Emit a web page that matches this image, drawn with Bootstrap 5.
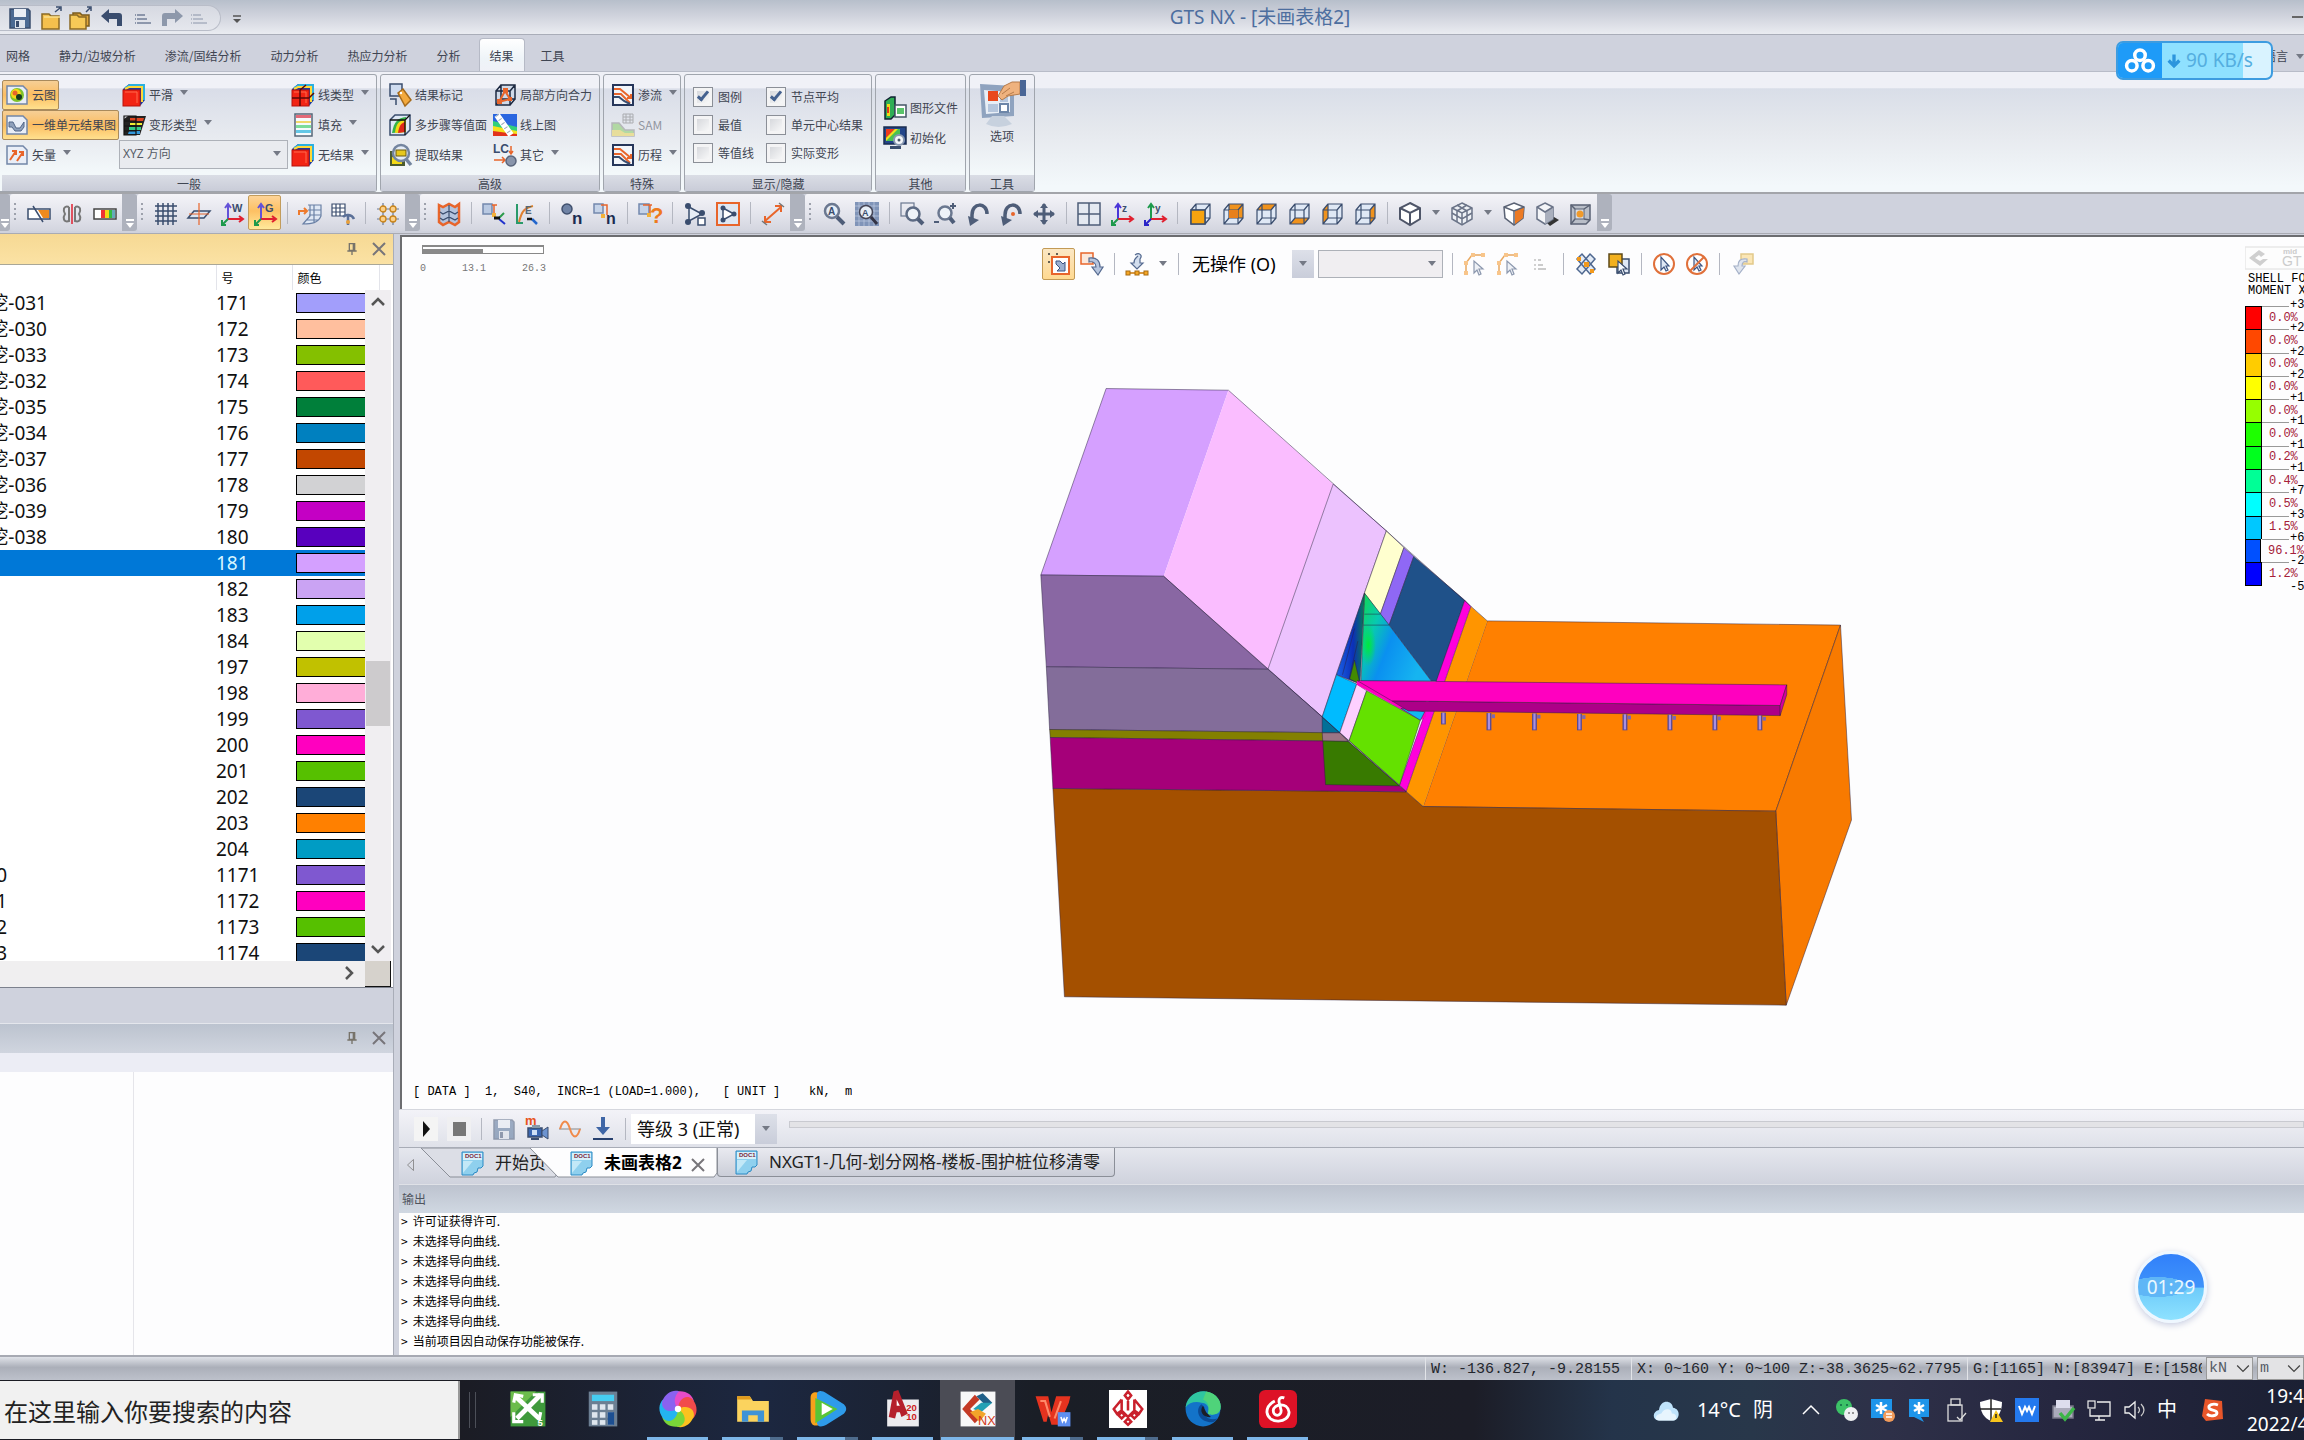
<!DOCTYPE html>
<html lang="zh-CN">
<head>
<meta charset="utf-8">
<meta name="viewport" content="width=device-width, initial-scale=1">
<title>GTS NX - [未画表格2]</title>
<link href="https://cdn.jsdelivr.net/npm/bootstrap@5.3.0/dist/css/bootstrap.min.css" rel="stylesheet">
<style>
:root{--ui:"Noto Sans","Noto Sans CJK SC",sans-serif;--mono:"Liberation Mono","Noto Sans CJK SC",monospace;--chrome:#cfd2dd;--ink:#3f4552}
body{font:12px/16px "Noto Sans CJK SC",sans-serif;color:var(--ink);background:var(--chrome);overflow:hidden}
button{font:inherit;color:inherit;background:none;border:0;padding:0}
a{color:inherit;text-decoration:none}
.ic{width:24px;height:24px;flex:none;display:block;overflow:visible}
.ic.thin{width:16px}
.caret{width:0;height:0;border:4px solid transparent;border-top:5px solid #747985;border-bottom:0;flex:none}
.title-bar{height:35px;background:linear-gradient(#b7bfcb,#cfd2dc 45%,#eaecf1);border-bottom:1px solid #a9adb8}
.quick{height:26px;margin-top:5px;border:1px solid #b9bdc8;border-left:0;border-radius:0 13px 13px 0;background:linear-gradient(#d6d9e1,#e5e7ed)}
.win-title{font:19px/24px var(--ui);color:#4d6e9f;padding:5px 0 0 216px}
.tab-row{height:36px;padding-top:3px;background:var(--chrome)}
.tab-row a{padding:10px 15px 0 14px;height:33px;border:1px solid transparent;border-width:0 0 1px}
.tab-row a:first-child{padding-left:6px}
.tab-row a.on{padding:9px 10px 0;height:34px;margin:0 2px 0 3px;background:linear-gradient(#fff,#eef4f8 60%,#f0f1f7);border:1px solid #b6bac6;border-bottom:0;border-radius:4px 4px 0 0}
.ribbon{height:122px;padding-top:2px;gap:3px;background:linear-gradient(#eff0f6 0 13%,#d9dee8 14%,#e6e9ee 50%,#f3f8fb 95%);border-top:1px solid #b8bcc8}
.grp{height:118px;border:1px solid #a0a5ad;border-radius:3px;background:linear-gradient(#f0f1f7 0 11%,#d9dde8 12%,#e8ebf0 55%,#f3f8fa 84%)}
.grp:first-child{border-left:0;border-radius:0 3px 3px 0;padding-left:2px}
.grp-in{height:100px;padding-top:5px}
.grp-name{height:16px;text-align:center;line-height:18px;background:linear-gradient(#dadde5,#c9ccd8)}
.rb{height:30px;display:flex;align-items:center;gap:3px;padding:0 2px;border:1px solid transparent;white-space:nowrap;border-radius:2px}
.rb.on{background:linear-gradient(#f6cf96,#fbbd62 50%,#ffe08e);border-color:#a98a5c}
.rb .caret{margin-left:4px;margin-bottom:4px}
.ck{height:28px;display:flex;align-items:center;gap:5px;white-space:nowrap}
.ck input{appearance:none;width:20px;height:20px;margin:0;border:1px solid #8b8f97;background:linear-gradient(135deg,#cfd1d6,#fff) padding-box;box-shadow:inset 0 0 0 3px #f4f4f5;display:grid;place-items:center}
.ck input:checked::after{content:"";width:6px;height:12px;border:solid #44618f;border-width:0 3px 3px 0;rotate:40deg;margin-top:-4px}
.combo{appearance:none;border:1px solid #adb1b8;border-radius:0;background:#e9ebef;color:#555b66;padding:0 3px;font:12px/16px var(--ui);outline:0}
.combo-box{position:relative}
.combo-box .caret{position:absolute;right:7px;top:50%;margin-top:-3px;pointer-events:none}
.combo.dir{width:169px;height:29px}
.big{width:48px;height:48px}
.drop{width:19px;display:flex;justify-content:center}
.tool-row{height:42px;border-top:2px solid #a3a5aa;border-bottom:1px solid #a9abb3;background:var(--chrome)}
.tbar{height:37px;background:linear-gradient(#f4f4f8,#e3e4ec 55%,#d3d5df);padding:0 1px 0 4px;border-radius:3px 0 0 3px}
.tbar .tb{width:33px;height:35px;padding-top:2px;display:flex;align-items:center;justify-content:center}
.tbar .tb.on{background:linear-gradient(#fdd498,#fdc063 45%,#ffe99b);border:1px solid #c29c5c;border-radius:2px}
.tbar .vr2{width:12px}
.vr2{display:flex;justify-content:center;flex:none}
.vr2::before{content:"";width:1px;height:22px;background:#b4b7c1}
.dots{width:4px;height:20px;margin-right:4px;background:repeating-linear-gradient(#9da1ac 0 2px,transparent 2px 5px) 0 0/2px 100% no-repeat}
.cap{width:15px;height:37px;background:#aeb2bd;display:flex;flex-direction:column;align-items:center;justify-content:flex-end;padding-bottom:3px;border-radius:0 3px 3px 0}
.cap:first-child{width:10px}
.cap::before{content:"";width:8px;height:2px;background:#fff;margin-bottom:2px}
.cap::after{content:"";border:4px solid transparent;border-top:5px solid #fff;border-bottom:0}
.side{width:394px;border-right:1px solid #a9adb8}
.pane-title{height:30px;padding:0 6px;gap:11px;background:linear-gradient(#bcc3cf,#d0d5df);border-top:1px solid #e4e6ec;color:#6c6f76}
.pane-title.gold{height:31px;background:linear-gradient(#f6d994,#fbe2a4);border-bottom:1px solid #a9a797;border-top:0}
.tree-box{padding-right:2px}
.tree{table-layout:fixed;width:380px;font:19px/26px var(--ui);color:#111;margin:0}
.tree th{font:12px/25px "Noto Sans CJK SC",sans-serif;height:25px;padding:0 0 0 5px;border-right:1px solid #e3e4ea;color:#000}
.tree th:nth-child(1){width:216px}.tree th:nth-child(2){width:76px}
.tree td{height:26px;padding:0;overflow:hidden;white-space:nowrap}
.tree tr.sel{background:#0078d7;color:#d8f6ff}
.nm{width:47px;display:flex;justify-content:flex-end;overflow:hidden;height:26px}
.nm.far{width:7px}
.sw{height:20px;margin-left:4px;border:1px solid #000;border-right:0}
.vscroll{width:26px;top:25px;background:#f0eef1}
.hscroll{height:26px;background:#f0eff0}
.vscroll .thumb{height:65px;width:24px;background:#cdcbcd;margin-top:347px}
.corner{width:26px;background:#d6d2cc;border:solid #111;border-width:0 1px 1px 0}
.gap-strip{height:36px;border-top:1px solid #7c818d}
.prop-head{height:19px;background:#ecedf5}
.prop-body{height:285px;background:#fdfdfe}
.prop-body div{width:134px;border-right:1px solid #e5e5ea}
.work{margin-left:5px}
.view{background:#fdfdfe;border:2px solid #6c6d70;border-width:2px 0 0 2px;margin:1px 0 0 1px;position:relative;overflow:hidden}
.scene{position:absolute;inset:0;width:100%;height:100%}
.vtools{position:absolute;left:640px;top:10px;height:34px;color:#000;font:18px/24px var(--ui)}
.vtools .tb{width:33px;height:32px;display:flex;align-items:center;justify-content:center}
.vtools .tb.on{background:linear-gradient(#fbe7c4,#ffd991);border:1px solid #c39a55;border-radius:2px}
.vtools .vr2{width:12px}
.vtools .combo{width:125px;height:28px;background:#f0eef1}
.ddbtn{width:22px;height:28px;display:flex;align-items:center;justify-content:center;background:linear-gradient(#dde0e9,#c9cdda)}
.ruler{position:absolute;left:18px;top:8px;width:126px;color:#777;font:10px/12px var(--mono)}
.ruler i{display:block;height:9px;margin:0 2px 9px;border:1px solid #888;border-width:2px 1px 1px;background:linear-gradient(90deg,#8a8a8a 50%,#fff 50%) 0 100%/100% 4px no-repeat}
.legend{position:absolute;right:0;top:9px;width:59px;color:#000;font:12px/12px var(--mono);white-space:nowrap;overflow:hidden}
.lg-brand{width:60px;height:24px;display:block}
.lg-head{padding:3px 0 9px 3px}
.lg-row{height:280px;margin-bottom:9px}
.lg-item{flex:1 1 0;position:relative;display:flex;align-items:center;color:#a52039}
.lg-item b{width:17px;align-self:stretch;border:1px solid #000;border-bottom-width:0;margin-right:7px}
.lg-item:last-child b{border-bottom-width:1px}
.lg-item::before{content:"";position:absolute;left:17px;top:0;width:27px;height:1px;background:#999}
.lg-item em{position:absolute;left:45px;top:-7px;color:#000;font-style:normal}
.lg-item em.end{top:auto;bottom:-7px}
.datum{position:absolute;left:11px;bottom:10px;margin:0;color:#000;font:12px/14px var(--mono);overflow:hidden}
.player{height:38px;background:linear-gradient(#f3f3f8,#dfe1e9);border-top:1px solid #d5d7de;padding-left:10px}
.player .tb{width:33px;height:32px;display:flex;align-items:center;justify-content:center}
.player .vr2{width:12px}
.player .combo{width:146px;height:30px;background:#fff;border:0;font:18px/24px var(--ui);color:#111;padding-left:6px}
.player .dd{position:absolute;right:0;top:0;height:30px}
.player .dd .caret{position:static;margin:0}
.track{appearance:none;height:7px;margin:0 0 8px 12px;border:1px solid #c9cad0;background:#e3e3e6;flex:1 1 0}
.track::-webkit-slider-thumb{appearance:none;width:0;height:0}
.docs{height:37px;background:linear-gradient(#e5e7ee,#cfd2dd);border-top:1px solid #a8acb6;font:17px/28px var(--ui);color:#222;padding-left:5px}
.docs .prev{width:12px;height:18px;display:block}
.docs .x{width:16px;height:16px}
.doc{position:relative;height:30px;display:flex;align-items:center;white-space:nowrap}
.doc>*{position:relative}
.doc>svg.edge{position:absolute;inset:0;width:100%;height:100%}
.doc .ic{margin-right:10px}
.doc.d1{width:137px;padding-left:40px;margin-left:5px}
.doc.d2{width:187px;padding-left:40px;margin-left:-28px;color:#000}
.doc.d3{height:29px;padding:0 14px 0 17px;border:1px solid #8b8f98;border-top:0;border-radius:0 0 4px 4px;background:linear-gradient(#e9eaf0,#cbced8)}
.out-title{height:29px;background:linear-gradient(#bdc3cf,#d0d8e2);padding:6px 3px;color:#50555f;border-top:1px solid #dfe1e7}
.log{height:142px;background:#fdfdfd;color:#000;font:12px/16px "Noto Sans CJK SC",sans-serif;padding:0 2px;overflow:hidden}
.log div{height:20px}
.log div::before{content:">";margin-right:5px}
.status{height:25px;border-top:2px solid #a7aab3;background:linear-gradient(#dfe2e8,#abafb9 45%,#bdc1cb);font:15px/22px var(--mono);color:#23262d;white-space:nowrap}
.status>span{border-left:1px solid #e2e4e8;padding:2px 0 0 5px;overflow:hidden}
.st1{width:206px}.st2{width:336px}.st3{width:235px}
.status .combo{height:23px;width:47px;background:#e3e3e5;font:15px/20px var(--mono);border-color:#999;padding:0 2px}
.status .cv{position:absolute;right:0;top:0;width:20px;height:22px}
.taskbar{height:60px;background:linear-gradient(90deg,#1b1c24 20%,#1c2740 33%,#1a1e26 45%,#1c1d27 64%,#24344a 70%,#28374a 76%,#2e3048 82%,#25263f 90%,#1b2033);color:#fff;font:20px/28px var(--ui)}
.search{width:460px;height:58px;margin:1px 0;border:0;border-right:2px solid #999;border-radius:0;background:#f1f1f1;color:#222;font:24px/30px "Noto Sans CJK SC",sans-serif;padding:0 0 0 4px}
.search::placeholder{color:#222;opacity:1}
.app{width:75px;height:60px;padding:0 7px;display:flex;flex-direction:column;align-items:center;justify-content:flex-end}
.app .ic{width:38px;height:38px;margin-bottom:9px}
.app i{height:3px;width:100%}
.app.run i{background:#7db6e8}
.app.more i{background:linear-gradient(90deg,#7db6e8 78%,#4e6b8c 78%)}
.app.on{background:#4b4c55;padding:0 1px}
.grip{width:7px;height:36px;border:solid #4c4f58;border-width:0 1px;margin:0 14px 0 9px}
.tray .ic{margin:0 6px}
.tray .ic.wx{width:34px;height:28px}
.clock{width:57px;text-align:right;font-size:19px;line-height:28px;overflow:hidden}
.speed{position:absolute;right:31px;top:41px;width:157px;height:39px;border:2px solid #3d9ce0;border-radius:7px;background:linear-gradient(90deg,#8fe1ff 82%,#d9f3ff 82%);color:#54aee0;font:19px/35px var(--ui);overflow:hidden;z-index:3}
.speed .cl{width:44px;height:35px;background:#1e9bf8;display:flex;align-items:center;justify-content:center}
.speed .cl svg{width:34px;height:28px}
.speed .dn{width:16px;height:35px;margin:0 4px}
.bubble{position:absolute;right:97px;bottom:117px;width:72px;height:72px;border-radius:50%;border:3px solid #eef7ff;background:radial-gradient(ellipse 30px 10px at 30% 50%,#5fb6f6 98%,transparent),linear-gradient(#3180fa,#3f93fa 50%,#6ecbfa 52%,#8ee2ff);box-shadow:0 2px 7px #c5cbe0;color:#e9f8ff;font:19px/66px var(--ui);text-align:center}
</style>
</head>
<body class="d-flex flex-column vh-100">
<header class="title-bar d-flex position-relative flex-none">
  <div class="quick d-flex align-items-center">
    <button class="ms-2" aria-label="保存"><svg class="ic" data-i="save"></svg></button>
    <button class="ms-2" aria-label="打开"><svg class="ic" data-i="folder"></svg></button>
    <button class="ms-1" aria-label="全部打开"><svg class="ic" data-i="folders"></svg></button>
    <button class="ms-2" aria-label="撤销"><svg class="ic" data-i="undo"></svg></button>
    <button class="ms-2" aria-label="撤销列表"><svg class="ic" data-i="list"></svg></button>
    <button class="ms-1" aria-label="重做"><svg class="ic" data-i="redo"></svg></button>
    <button class="ms-1 me-2 opacity-50" aria-label="重做列表"><svg class="ic" data-i="list"></svg></button>
  </div>
  <button class="ms-1" aria-label="自定义"><svg class="ic" data-i="more"></svg></button>
  <div class="win-title position-absolute top-0 start-0 w-100 text-center pe-none">GTS NX - [未画表格2]</div>
  <button class="ms-auto align-self-center" aria-label="最小化"><svg class="ic" data-i="min"></svg></button>
</header>
<nav class="tab-row d-flex" aria-label="功能区">
  <a href="#">网格</a><a href="#">静力/边坡分析</a><a href="#">渗流/固结分析</a><a href="#">动力分析</a><a href="#">热应力分析</a><a href="#">分析</a><a href="#" class="on">结果</a><a href="#">工具</a>
  <a href="#" class="ms-auto pe-0">语言</a><span class="caret mt-3 ms-2"></span>
</nav>
<section class="ribbon d-flex">
  <div class="grp">
    <div class="grp-in d-flex">
      <div class="d-flex flex-column align-items-start">
        <button class="rb on"><svg class="ic" data-i="contour"></svg>云图</button>
        <button class="rb on"><svg class="ic" data-i="beam"></svg>一维单元结果图</button>
        <button class="rb"><svg class="ic" data-i="vector"></svg>矢量<span class="caret"></span></button>
      </div>
      <div>
        <button class="rb"><svg class="ic" data-i="smooth"></svg>平滑<span class="caret"></span></button>
        <button class="rb"><svg class="ic" data-i="deform"></svg>变形类型<span class="caret"></span></button>
        <div class="combo-box"><select class="combo dir" aria-label="变形方向"><option>XYZ 方向</option></select><span class="caret"></span></div>
      </div>
      <div class="pe-1">
        <button class="rb"><svg class="ic" data-i="linetype"></svg>线类型<span class="caret"></span></button>
        <button class="rb"><svg class="ic" data-i="fill"></svg>填充<span class="caret"></span></button>
        <button class="rb"><svg class="ic" data-i="smooth"></svg>无结果<span class="caret"></span></button>
      </div>
    </div>
    <div class="grp-name">一般</div>
  </div>
  <div class="grp">
    <div class="grp-in d-flex px-1">
      <div>
        <button class="rb"><svg class="ic" data-i="tag"></svg>结果标记</button>
        <button class="rb"><svg class="ic" data-i="steps"></svg>多步骤等值面</button>
        <button class="rb"><svg class="ic" data-i="extract"></svg>提取结果</button>
      </div>
      <div>
        <button class="rb"><svg class="ic" data-i="force"></svg>局部方向合力</button>
        <button class="rb"><svg class="ic" data-i="plot"></svg>线上图</button>
        <button class="rb"><svg class="ic" data-i="lc"></svg>其它<span class="caret"></span></button>
      </div>
    </div>
    <div class="grp-name">高级</div>
  </div>
  <div class="grp">
    <div class="grp-in ps-1">
      <button class="rb"><svg class="ic" data-i="seep"></svg>渗流<span class="caret"></span></button>
      <button class="rb opacity-50"><svg class="ic" data-i="sam"></svg>SAM</button>
      <button class="rb"><svg class="ic" data-i="seep"></svg>历程<span class="caret"></span></button>
    </div>
    <div class="grp-name">特殊</div>
  </div>
  <div class="grp">
    <div class="grp-in d-flex ps-2 pe-2 pt-2">
      <div class="me-2 pe-1">
        <label class="ck"><input type="checkbox" checked>图例</label>
        <label class="ck"><input type="checkbox">最值</label>
        <label class="ck"><input type="checkbox">等值线</label>
      </div>
      <div>
        <label class="ck"><input type="checkbox" checked>节点平均</label>
        <label class="ck"><input type="checkbox">单元中心结果</label>
        <label class="ck"><input type="checkbox">实际变形</label>
      </div>
    </div>
    <div class="grp-name">显示/隐藏</div>
  </div>
  <div class="grp">
    <div class="grp-in d-flex flex-column justify-content-center ps-1 pe-1 pb-2">
      <button class="rb"><svg class="ic" data-i="gfile"></svg>图形文件</button>
      <button class="rb"><svg class="ic" data-i="init"></svg>初始化</button>
    </div>
    <div class="grp-name">其他</div>
  </div>
  <div class="grp">
    <div class="grp-in px-2">
      <button class="text-center d-block"><svg class="ic big" data-i="options"></svg>选项</button>
    </div>
    <div class="grp-name">工具</div>
  </div>
</section>
<div class="tool-row d-flex" id="tools"></div>

<main class="d-flex flex-grow-1 overflow-hidden">
  <aside class="side d-flex flex-column">
    <div class="pane-title gold d-flex align-items-center justify-content-end flex-none"><button aria-label="固定"><svg class="ic thin" data-i="pin"></svg></button><button aria-label="关闭"><svg class="ic thin" data-i="close"></svg></button></div>
    <div class="tree-box bg-white d-flex flex-column overflow-hidden flex-grow-1">
      <div class="d-flex overflow-hidden flex-grow-1 position-relative">
        <div class="flex-grow-1 overflow-hidden">
          <table class="tree"><thead><tr><th></th><th>号</th><th>颜色</th></tr></thead><tbody id="rows"></tbody></table>
        </div>
        <div class="vscroll position-absolute end-0 bottom-0 d-flex flex-column align-items-center"><svg class="ic" data-i="up"></svg><div class="thumb flex-none"></div><svg class="ic mt-auto" data-i="down"></svg></div>
      </div>
      <div class="hscroll d-flex flex-none"><svg class="ic ms-auto" data-i="right"></svg><div class="corner ms-1"></div></div>
    </div>
    <div class="gap-strip"></div>
    <div class="pane-title d-flex align-items-center justify-content-end"><button aria-label="固定"><svg class="ic thin" data-i="pin"></svg></button><button aria-label="关闭"><svg class="ic thin" data-i="close"></svg></button></div>
    <div class="prop-head"></div>
    <div class="prop-body d-flex"><div></div></div>
  </aside>
  <section class="work flex-grow-1 d-flex flex-column overflow-hidden">
    <div class="view flex-grow-1" id="view">
      <svg class="scene" viewBox="402 238 1902 872" preserveAspectRatio="xMidYMid meet" role="img" aria-label="三维模型">
        <defs>
          <linearGradient id="ga" x1="0" x2="1" y1="0" y2=".5"><stop offset="0" stop-color="#12d84a"/><stop offset=".3" stop-color="#08c9b0"/><stop offset=".55" stop-color="#0a90f0"/><stop offset="1" stop-color="#16b4f0"/></linearGradient>
          <linearGradient id="gb" x1="0" x2="1"><stop offset="0" stop-color="#1a62e8"/><stop offset=".6" stop-color="#0c2fb8"/><stop offset="1" stop-color="#0a7c50"/></linearGradient>
          <radialGradient id="gc"><stop offset="0" stop-color="#00e83c"/><stop offset="1" stop-color="#00e83c" stop-opacity="0"/></radialGradient>
        </defs>
        <svg x="1020" y="360" width="860" height="660" viewBox="0 0 1568 1568" preserveAspectRatio="none">
          <g stroke="#2a2040" stroke-width="1" stroke-linejoin="round">
            <path fill="#ff8000" d="M852 622 1496 632 1378 1074 735 1063Z"/>
            <path fill="#f87a00" d="M1496 632 1516 1095 1397 1535 1378 1074Z"/>
            <path fill="#a45000" d="M60 1020 704 1028 735 1063 1378 1074 1397 1535 81 1515Z"/>
            <path fill="#ff9500" stroke="none" d="M822 588 852 622 735 1063 704 1028Z"/>
            <path fill="#d5a0ff" stroke="none" d="M157 70 380 74 262 516 38 513Z"/>
            <path fill="none" d="M380 74 157 70 38 513 262 516"/>
            <path fill="#fabdff" stroke="none" d="M380 74 571 297 452 737 262 516Z"/>
            <path fill="#ecc2fe" d="M571 297 668 408 628 556 577 748 551 850 452 737Z"/>
            <path fill="#ffffcf" d="M668 408 700 448 657 606 628 556Z"/>
            <path fill="#8f68f5" d="M700 448 718 469 673 632 657 606Z"/>
            <path fill="#1f5189" d="M718 469 811 573 760 765 750 765 673 632Z"/>
            <path fill="#ff00dc" d="M811 573 822 588 704 1028 692 1012Z"/>
            <path fill="#8967a3" d="M38 513 262 516 452 737 48 731Z"/>
            <path fill="#836d9a" d="M48 731 452 737 551 850 583 888 54 880Z"/>
            <path fill="#838000" d="M54 880 583 888 598 908 55 899Z"/>
            <path fill="#a50079" d="M55 899 598 908 704 1028 60 1020Z"/>
            <path fill="#387a00" d="M552 906 598 908 692 1014 557 1011Z"/>
            <path fill="#007098" d="M551 850 583 888 551 888Z"/>
            <path fill="#9c7585" d="M551 888 583 888 598 908 552 907Z"/>
            <path fill="url(#ga)" d="M628 556 673 632 750 765 622 765Z"/>
            <ellipse cx="635" cy="680" rx="14" ry="50" fill="url(#gc)" stroke="none"/>
            <path fill="url(#gb)" d="M628 556 620 772 577 750Z"/>
            <path fill="#438b00" d="M610 715 620 772 601 760Z"/>
            <path fill="none" d="M628 606H657M626 632H673M610 640 588 750M616 670 600 760"/>
            <path fill="#00bbff" d="M577 750 614 772 583 888 551 850Z"/>
            <path fill="#fdd0ff" d="M614 772 632 788 600 907 583 888Z"/>
            <path fill="#ff00bf" stroke="none" d="M614 764 740 800 740 850 730 858 614 774Z"/>
            <path fill="#64e100" d="M632 788 730 858 692 1012 600 907Z"/>
            <path fill="#12b8f0" d="M695 830 738 838 730 858Z"/>
            <path fill="#ad0088" d="M678 812 1386 823 1386 847 708 836Z"/>
            <path fill="#ff00bf" d="M615 764 1398 774 1386 823 678 812Z"/>
            <path fill="#d4009f" d="M1398 774 1398 797 1386 847 1386 823Z"/>
            <path fill="none" d="M380 74 852 622M262 516 735 1063"/>
          </g>
          <g id="piles"></g>
        </svg>
      </svg>
      <div class="ruler"><i></i><div class="d-flex justify-content-between"><span>0</span><span>13.1</span><span>26.3</span></div></div>
      <div class="vtools d-flex align-items-center" id="vtools"></div>
      <div class="legend">
        <svg class="lg-brand" data-i="brand"></svg>
        <div class="lg-head">SHELL FO<br>MOMENT X</div>
        <div class="lg-row d-flex flex-column" id="legend"></div>
      </div>
      <pre class="datum">[ DATA ]  1,  S40,  INCR=1 (LOAD=1.000),   [ UNIT ]    kN,  m</pre>
    </div>
    <div class="player d-flex align-items-center flex-none" id="player">
      <button class="tb" aria-label="播放"><svg class="ic" data-i="play"></svg></button>
      <button class="tb" aria-label="停止"><svg class="ic" data-i="stop"></svg></button>
      <span class="vr2"></span>
      <button class="tb" aria-label="保存"><svg class="ic opacity-50" data-i="save"></svg></button>
      <button class="tb" aria-label="录像"><svg class="ic" data-i="cam"></svg></button>
      <button class="tb" aria-label="曲线"><svg class="ic" data-i="wave"></svg></button>
      <button class="tb" aria-label="下载"><svg class="ic" data-i="down2"></svg></button>
      <span class="vr2"></span>
      <div class="combo-box"><select class="combo" aria-label="等级"><option>等级 3 (正常)</option></select><span class="ddbtn dd"><span class="caret"></span></span></div>
      <input class="track" type="range" aria-label="进度">
    </div>
    <nav class="docs d-flex align-items-start flex-none">
      <button class="pt-2" aria-label="向左"><svg class="prev" data-i="prev"></svg></button>
      <a href="#" class="doc d1"><svg class="edge" viewBox="0 0 137 30" preserveAspectRatio="none"><path d="M0 0 29 29H134L137 24V0Z" fill="#dcdee6" stroke="#8b8f98"/></svg><svg class="ic" data-i="doc"></svg><span>开始页</span></a>
      <a href="#" class="doc d2"><svg class="edge" viewBox="0 0 187 30" preserveAspectRatio="none"><path d="M0 0 28 29H184L187 25V0" fill="#fdfdfe" stroke="#8b8f98"/></svg><svg class="ic" data-i="doc"></svg><strong>未画表格2</strong><svg class="x ms-2 mt-1" data-i="close"></svg></a>
      <a href="#" class="doc d3"><svg class="ic" data-i="doc"></svg><span>NXGT1-几何-划分网格-楼板-围护桩位移清零</span></a>
    </nav>
    <div class="out-title flex-none">输出</div>
    <div class="log flex-none" id="log"></div>
  </section>
</main>

<footer class="status d-flex justify-content-end">
  <span class="st1">W: -136.827, -9.28155</span>
  <span class="st2">X: 0~160 Y: 0~100 Z:-38.3625~62.7795</span>
  <span class="st3">G:[1165] N:[83947] E:[1580</span>
  <div class="combo-box mx-1"><select class="combo" aria-label="力单位"><option>kN</option></select><svg class="cv" data-i="chev"></svg></div>
  <div class="combo-box"><select class="combo" aria-label="长度单位"><option>m</option></select><svg class="cv" data-i="chev"></svg></div>
</footer>
<div class="taskbar d-flex align-items-center flex-none">
  <input class="search" aria-label="搜索" placeholder="在这里输入你要搜索的内容">
  <div class="grip"></div>
  <div class="d-flex" id="apps"></div>
  <div class="tray d-flex align-items-center ms-auto">
    <svg class="ic wx" data-i="cloud"></svg><span class="ms-2">14°C</span><span class="ms-2 ps-1 me-3">阴</span>
    <div class="d-flex ms-1" id="tray"></div><span class="ms-1">中</span><svg class="ic ms-4" data-i="sogou"></svg>
    <div class="clock ms-3">19:4<br>2022/4</div>
  </div>
</div>
<div class="speed d-flex"><span class="cl"><svg data-i="pan"></svg></span><svg class="dn" data-i="arrowdn"></svg>90 KB/s</div>
<div class="bubble">01:29</div>

<script>
const N='#3a4d6e', O='#e8652b';
const P=(d,f='none',s='none',w=1.5)=>`<path d="${d}" fill="${f}" stroke="${s}" stroke-width="${w}"/>`;
const C=(x,y,r,f,s='none',w=1.5)=>`<circle cx="${x}" cy="${y}" r="${r}" fill="${f}" stroke="${s}" stroke-width="${w}"/>`;
const R=(x,y,w,h,f='none',s='none',k=1.5)=>`<rect x="${x}" y="${y}" width="${w}" height="${h}" fill="${f}" stroke="${s}" stroke-width="${k}"/>`;
const T=(x,y,t,z,f=N,b=700)=>`<text x="${x}" y="${y}" font-family="Liberation Sans,sans-serif" font-size="${z}" font-weight="${b}" fill="${f}">${t}</text>`;
const rain=P('M1 6 7 1H23V17L18 23H1Z','#1c3a9c')+P('M3 5 8 2H22V17','none','#2bb0e0',2)+P('M3 6 7 4H20V19','none','#ffd835',2)+R(1,7,17,16,'#f22414','#b8120c',1)+P('M3 9H15V20','none','#ff6a4a',1);
const page=P('M2 3H18L22 7V21H2Z','#e9eef7','#7286a8');
const wire='M3 8H17V22H3ZM8 2H22V16H8ZM3 8 8 2M17 8 22 2M17 22 22 16M3 22 8 16';
const cube=(h,front)=>P('M3 8 8 2H22V16L17 22H3Z','#dfe8f5')+(front?P(wire,'none',N,1.2)+P(h,'#f6a30f',N,1.5):P(h,'#f0921c')+P(wire,'none',N,1.2));
const axes=(a,l,up,dn)=>P('M8 18V3M5 6 8 2 11 6','none',up,2)+P('M8 17H22M19 14 23 17 19 20','none','#e02030',2)+P('M8 17 2 23M2 18V23H6','none',dn,2)+(l?T(12,10,l,a):'');
const pointer='M11 9V21L14 18 16 23 18 22 16 17H20Z';
const I={
save:P('M2 3H20L22 5V22H2Z','#4b6a93',N)+R(6,3,12,8,'#e9eef6')+R(7,14,10,8,'#dde3ec')+R(8,15,3,6,N),
folder:P('M2 8H9L11 10H19V23H2Z','#f4c04d','#8a6a24')+P('M4 11H20','none','#fbe08d')+P('M15 6 20 2M16 1H21V5','none',N),
folders:P('M5 7H12L14 9H21V20H5Z','#e0a63a','#7a5b1c')+P('M2 9H9L11 11H18V23H2Z','#f6c957','#8a6a24')+P('M18 6 22 2M19 1H23V5','none',N),
undo:P('M1 10 9 3V7H19Q22 7 22 10V20H17V13H9V17Z',N),redo:P('M23 10 15 3V7H5Q2 7 2 10V20H7V13H15V17Z','#8d98ab'),
list:P('M5 9H13M5 13H15M5 17H19','none',N,1)+P('M3 9H4M3 13H4M3 17H4','none',N,1),
more:P('M8 11H16','none','#555',1.5)+P('M8 14H16L12 18Z','#555'),min:P('M12 12H23','none','#666',2),
contour:page+C(12,12,7,'#7fc22c')+C(11,11,5,'#f3d916')+C(10,10,2.5,O)+C(14,14,3,'#153a20'),
beam:page+P('M4 9H8L11 15H15L19 9V14L16 18H10L7 14H4Z','#8fa0bb','#526687',1),
vector:page+P('M5 17 11 8M7 8H11V12M12 18 18 9M14 9H18V13','none',O,2),
smooth:rain,linetype:rain+P('M9 7V23M1 15H18M9 7 15 2M18 15 23 10','none','#5a0707',1.5),
deform:P('M6 3H24L18 22H2V6Z','#222')+P('M8 5H22L21 8H8Z','#d42')+P('M8 10H20V12H8Z','#ee3')+P('M7 14H19V17H7Z','#3c8')+P('M7 18H18V21H6Z','#39d')+P('M2 3H14V22H2ZM2 8H14M2 13H14M2 18H14','none','#111',1.2),
fill:R(4,1,17,22,'#f7fafc','#567',1.5)+R(5,2,15,3,'#e46a78')+R(5,8,15,2,'#f2d86a')+R(5,12,15,3,'#7ddc9a')+R(5,17,15,3,'#63c7e6'),
tag:R(2,1,12,12,'#cfdcf0',N)+P('M2 16H8V22','none',N)+P('M10 10 15 6 23 17 17 23Z','#f3a93c','#a56a1a')+C(13,10,1.2,'#fff'),
steps:P('M2 7 7 2H22V17L17 22H2Z','#dfe8f5',N)+P('M4 20C6 8 10 5 18 4V19Z','#36b34a')+P('M7 20C8 10 11 8 18 6V19Z','#f3d916')+P('M10 20C11 13 13 10 17 9V19Z','#e02818')+P('M2 7H17V22M17 7 22 2','none','#111',1.3),
extract:R(2,8,15,15,'#4a5a30')+R(4,14,10,7,'#f3d916')+C(13,10,8,'#e4ecf7','#74859f',2.5)+R(8,7,10,6,'#e6c81e','#6b5b12',1)+P('M18 16 23 22','none','#74859f',3.5),
force:P(wire,'#cfd9e8','#1e2a42',1.5)+P('M6 19 12 8 17 16Z','none',O,2)+R(4,16,5,5,O)+R(10,5,5,5,O)+R(15,14,4,4,O),
plot:R(0,1,24,22,'#2a66e0')+P('M0 8 24 14V23H0Z','#31d07b')+P('M0 13 24 18V23H0Z','#f5e11c')+P('M0 18 24 21V23H0Z','#e2331b')+P('M4 2 18 22','none','#fff',6)+`<path d="M4 2 18 22" stroke="#9ab" stroke-width="4" stroke-dasharray="1 4"/>`,
lc:T(0,10,'LC',12)+P('M1 17H12M9 14 12 17 9 20','none',O)+C(18,18,5,'#8995ab','#5a667c')+P('M18 3V11M16 8 18 11 20 8','none',O),
seep:R(2,2,20,20,'#f2f5fa','#26365a',2)+P('M3 6H9L20 15M3 11H10L19 20M16 15H20V11','none',O,2)+P('M3 14H8L13 18 19 21','none',N,2),
sam:P('M1 10H8L14 17H23V23H1Z','#7fca5a','#888')+P('M1 17H9L14 20H23V23H1Z','#e9d34a')+P('M12 1H22V10H12ZM15 1V10M19 1V10M12 4H22M12 7H22','none','#777',1),
gfile:P('M2 5 8 1H12V19L8 23H2Z','#2fae55','#123',1.5)+P('M4 8H7V20H4Z','#f3d916')+P('M4 11H6V17H4Z','#e33a1c')+R(12,9,11,12,'#fff','#456')+R(14,12,7,6,'#59c36a'),
init:R(1,1,22,17,'#22458a','#1a2c50')+R(3,3,14,12,'#49c152')+P('M3 3H12L3 12Z','#ee3a1c')+P('M12 3H15L3 15V12Z','#f4df1d')+C(16,14,5,'#f4f6fa','#8898b0',2)+C(16,14,1.5,'#456')+R(7,20,11,3,N),
options:P('M1 2 18 3V18L2 19Z','#8fa3bf')+P('M3 5 16 6V16L4 17Z','#e8eef6')+R(5,5.500,5,5,'#e9481c')+R(11,12,4,4,'#fff','#6d86a8',1)+R(5,12,5,4,'#b5c6dd')+R(11,7,4,4,'#b5c6dd')+P('M7 18H13L17 22Q10 25 4 22Z','#c7d1de')+P('M10 8 13 3 17 1H21V7L15 8 12 10Z','#efb27e','#b57b4a',.5)+P('M12 7 16 4M14 8 18 6','none','#b57b4a',.5)+R(21,0,3,8,'#4a6696'),
clip1:R(1,7,22,10,'#fff',N,1.5)+P('M11 8H22V16H16Z','#ee8a1f')+P('M6 4 16 20','none',N),
mirror:P('M9 5C3 3 3 9 5 12C3 15 3 21 9 19V5M15 5C21 3 21 9 19 12C21 15 21 21 15 19V5','none','#777',2)+P('M12 2V22','none','#e02030',1.5),
grad:R(1,7,22,10,'#fff','#444')+R(8,8,4,8,'#e33')+R(12,8,4,8,'#f3d916')+R(16,8,3,8,'#3b4')+R(19,8,3,8,'#6ab'),
grid:P('M4 1V23M9 1V23M14 1V23M19 1V23M1 4H23M1 9H23M1 14H23M1 19H23','none',N,1.5),
plane:P('M7 9H23L17 16H1Z','#dbe6f4',N)+P('M12 1V23M2 12H22','none',O,1.2),
wcs:axes(11,'W','#6352d8','#1e9a4c'),gcs:axes(11,'G','#6352d8','#1e9a4c'),
meshmv:P('M10 3H23V14C20 21 14 22 5 22L12 14V3M16 3V20M10 8H23M11 13H23M8 18H20','#dfe8f5','#6a80a5',1.2)+P('M1 13V9H8M6 6 9 9 6 12','none','#ee7a2c',2),
meshed:P('M1 2H14V14H1ZM5 2V14M9 2V14M1 6H14M1 10H14','#fff',N,1.2)+P('M12 15C14 12 21 12 23 17M17 14V23','none','#5b7098',2.5)+C(17,20,2,'#e9a03a'),
nodes:P('M7 1V23M17 1V23M1 7H23M1 17H23','none','#6a7a98',1.2)+C(7,7,3,'#fbd08a','#c8841a',1.3)+C(17,7,3,'#fbd08a','#c8841a',1.3)+C(7,17,3,'#fbd08a','#c8841a',1.3)+C(17,17,3,'#fbd08a','#c8841a',1.3),
surf:P('M2 3 6 5 12 2 18 5 22 2V20L18 23 12 20 6 23 2 20Z','#b4c4de',O,2.5)+P('M3 10 6 12 12 9 18 12 21 10M3 16 6 18 12 15 18 18 21 16M12 3V20','none',N,1.2),
noder:R(1,2,9,10,'#b9c9e2','#7388ad')+P('M10 3H15M12 3V12','none',O)+R(10,11,4,4,'#f3b23a')+P('M17 16 22 11','none','#2a9a4a',2)+P('M17 17 23 22','none','#23c',2)+P('M12 16H18','none','#111',3),
noder2:P('M2 2V21H8','none','#2a9a6a',2)+P('M4 20C7 8 10 6 18 4','none','#e08030',2)+T(10,12,'E',10,'#567')+P('M17 17 22 22','none','#26c',2.5)+P('M12 17H17','none','#111',2.5),
onn:C(7,7,5,'#7083a5','#40506e')+T(12,22,'n',17,'#1c2c50'),
boxn:R(1,2,9,9,'#c5d3e8','#7388ad')+P('M8 3H14V13','none',O)+R(8,12,4,4,'#f3b23a')+T(13,22,'n',16,'#1c2c50'),
ask:R(1,2,10,10,'#c5d3e8','#7388ad')+P('M5 3H14M12 3V11','none',O)+R(9,11,4,4,'#f3b23a')+T(12,21,'?',22,'#ee7a1c'),
tri:P('M6 5 19 12 6 19Z','#e6edf6',N)+C(5,4,3,N)+C(19,11,3,N)+C(5,20,3,N)+R(15,16,7,7,'#fff',N),
trib:R(1,1,22,22,'#dfe7f2',O,2)+P('M7 6 18 12 7 18Z','#fff',N)+C(7,6,2.5,N)+C(18,12,2.5,N)+C(7,18,2.5,N),
meas:P('M4 19 20 5M4 14V20H10M14 4H20V10','none',O,2)+P('M1 19 6 23M18 1 23 5','none','#777'),
za:C(10,9,7,'#e6edf6','#6b7890',2.5)+T(6,13,'A',10)+P('M15 15 22 22','none','#4e5d78',4),
zag:R(0,0,24,24,'#8094b8')+P('M0 4H24M0 9H24M0 14H24M0 19H24M4 0V24M9 0V24M14 0V24M19 0V24','none','#c9d5e8',.6)+C(11,10,6.5,'#e6edf6','#445',1.5)+T(7,14,'A',9)+P('M16 15 22 22','none','#334',3),
zw:R(1,1,13,13,'none','#6b7890',1.2)+C(13,12,6.5,'#eef3f9','#5d6b84',2.5)+P('M18 17 23 22','none','#4e5d78',4),
zpm:C(12,11,6.5,'#eef3f9','#6b7890',2.5)+P('M1 20H6M20 1V7M17 4H23','none','#4e5d78',2)+P('M17 16 21 21','none','#4e5d78',4),
rot:P('M21 12C21 0 6 0 6 13V17','none','#4e5d78',3.5)+P('M2 14 13 18 4 24Z','#4e5d78'),
rotc:P('M21 12C21 0 6 0 6 13V17','none','#4e5d78',3.5)+P('M2 14 13 18 4 24Z','#4e5d78')+C(14,12,2,O),
pan4:P('M12 2V22M2 12H22','none','#4e5d78',3)+P('M8 6 12 1 16 6ZM8 18 12 23 16 18ZM6 8 1 12 6 16ZM18 8 23 12 18 16Z','#4e5d78'),
win4:R(1,1,22,22,'#e4e9f1','#4e5d78',1.5)+P('M12 1V23M1 12H23','none','#4e5d78'),
axz:axes(10,'z','#4a35d8','#1e9a4c'),axy:axes(10,'y','#1e9a4c','#2a25c8'),
cf:cube('M3 8H17V22H3Z',1),cb:cube('M8 2H22V16H17V8H8Z')+R(8,8,9,8,'#e8801c'),ct:cube('M3 8 8 2H22L17 8Z'),cbo:cube('M3 22 8 16H22L17 22Z'),cl:cube('M3 8 8 2V16L3 22Z'),cr:cube('M17 8 22 2V16L17 22Z'),
iso:P('M12 1 22 6V17L12 23 2 17V6Z','#fff','#4e5568',2)+P('M2 6 12 11 22 6M12 11V23','none','#4e5568',2),
isog:P('M12 1 22 6V17L12 23 2 17V6Z','#eef1f6','#6b7488')+P('M2 6 12 11 22 6M12 11V23M2 11 12 17 22 11M7 3 17 9V20M17 3 7 9V20','none','#6b7488'),
isoo:P('M12 1 22 5 21 16 12 23 3 16 2 5Z','#fff','#5a6274',1.5)+P('M13 9 22 5 21 16 13 22Z','#ec7a24')+P('M2 5 12 9 22 5M12 9V23','none','#5a6274'),
isos:P('M12 21 19 15 24 18 15 24Z','#333')+P('M10 1 18 5V17L10 22 2 17V5Z','#f4f5f8','#6b7488')+P('M10 10 18 5V17L10 22Z','#a9afbd')+P('M2 5 10 10 18 5','none','#6b7488'),
isop:P('M3 3H22V18L18 22H3Z','#b9bec8','#5a6274')+R(7,7,9,10,'#d9dde5','#5a6274',1)+C(12,12,3.5,'#f09a2a')+P('M3 3 7 7M22 3 16 7M3 22 7 17M22 18 16 17','none','#5a6274'),
v1:R(5,5,17,17,'#fff',O,2)+P('M9 9 13 9 16 12 18 10V19H10L13 16 9 12Z','#9cb0d0','#3d5582',1)+C(2,2,1,'#333')+C(2,10,1,'#333')+C(10,2,1,'#333'),
v2:R(1,1,12,11,'#fbe8dc',O,1.5)+P('M9 6C17 5 20 9 20 15H23L18 23 12 15H16C16 11 13 9 9 10Z','#b6c5de','#54698f',1.2),
v3:P('M10 3C14 0 18 3 15 7V11H18L12 17 6 11H9C9 6 11 6 13 4','#d3deee','#54698f',1.2)+P('M3 21H21','none','#c70',1.5)+R(1,19,4,4,'#f6a623','#a66a10',1)+R(10,19,4,4,'#f6a623','#a66a10',1)+R(19,19,4,4,'#f6a623','#a66a10',1),
v4:P('M3 21V11L9 3H20','none','#e8a860')+R(1,19,4,4,'#f8c58a')+R(1,9,4,4,'#f8c58a')+R(8,1,4,4,'#f8c58a')+R(18,1,4,4,'#f8c58a')+P(pointer,'#eef1f6','#8c98ae',1.2),
v6:P('M9 8H12M9 13H14M9 17H17','none','#999',1)+C(6,8,.8,'#999')+C(6,13,.8,'#999')+C(6,17,.8,'#999'),
v7:P('M3 7 8 2 21 17 16 22ZM16 2 21 7 8 22 3 17Z','#e3ebf6','#4f6890',1.5)+R(10,10,5,5,'#f39a1d')+R(3,5,4,4,'#f39a1d')+R(16,17,4,4,'#f39a1d'),
v8:R(10,7,12,14,'#dfe8f5',N)+R(2,2,13,13,'#f2b01e','#5d4a1a')+P(pointer,'#f7fafd',N,1.2),
v9:C(12,12,10,'#fff','#e0703a',2)+P('M9 5V18L12 15 14 19 16 18 14 14H17Z','#dfe8f5','#3d5582',1.2),
v10:C(12,12,10,'#fff','#e0703a',2)+P('M9 5V18L12 15 14 19 16 18 14 14H17Z','#dfe8f5','#3d5582',1.2)+P('M5 19 19 5','none','#e0703a',2),
v11:R(11,2,12,10,'#fbe6b5','#e2c98a')+P('M17 7C10 6 8 9 8 14H4L9 22 15 14H12C12 10 14 9 17 10Z','#dfe5ef','#a5b1c8',1.2),
pin:P('M8 4H16V14H8ZM5 15H19M12 15V21M14 4V14','none','#77736a',2),close:P('M3 3 21 21M21 3 3 21','none','#77757a',3),
up:P('M6 15 12 9 18 15','none','#555',2.5),down:P('M6 9 12 15 18 9','none','#555',2.5),right:P('M9 6 15 12 9 18','none','#555',2.5),
chev:P('M5 9 12 16 19 9','none','#444',1.5),prev:P('M19 1 7 12 19 23Z','none','#777',1.5),
play:R(0,0,24,24,'#f4f4f4')+P('M9 4 16 12 9 20Z','#111'),stop:R(0,0,24,24,'#f0f0f2')+R(6,5,13,14,'#777'),
cam:T(0,8,'m',13,'#e8541c')+R(3,11,14,9,'#3a66b0',N)+P('M17 14 23 10V22L17 18Z','#6d94d0',N,1)+R(7,8,8,3,'#89a')+R(7,13,5,5,'#cfe0f6')+R(6,21,8,2,N),
wave:P('M1 12H23','none','#888',1)+P('M2 12C5 2 9 2 12 12C15 22 19 22 22 12','none','#f08a4a',2),
down2:P('M10 0H14V10H19L12 18 5 10H10Z','#3f66a6')+P('M2 22H22','none','#27406e',2),
doc:P('M1 1H22V15L20 17 17 17 16 21 13 22 12 24H1Z','#8fd0ee','#2a8ac4',1)+P('M2 2H21V9H2Z','#d7f0fa')+P('M2 22 12 10H2Z','#c3e8f7')+T(4,7,'DOC1',6,'#7a1f3a'),
brand:R(0,1,60,22,'#fdfdfd','#e8e8e8')+P('M4 12 14 4 20 8 16 11 14 9 10 12 15 15 18 13H23L15 20Z','#cfcfcf')+T(38,8,'mid',8,'#ccc')+T(37,20,'GT',14,'#ccc',400),
cloud:P('M6 21C0 21 0 13 6 12C7 3 17 3 18 10C25 11 24 21 18 21Z','#bfe3fb')+P('M6 21C2 21 2 16 8 15C10 10 17 10 17 15C22 15 22 21 18 21Z','#e7f5fe'),
pan:C(12,7,4.5,'none','#fff',3)+C(5,16,4.5,'none','#fff',3)+C(19,16,4.5,'none','#fff',3),
arrowdn:P('M12 3V20M4 12 12 20 20 12','none','#2c95dd',5),
tChev:P('M4 16 12 8 20 16','none','#fff',1.5),
wechat:C(9,9,8,'#3cc267')+C(16,16,7,'#eef0f2')+C(6,7,1,'#164')+C(12,7,1,'#164')+C(14,15,1,'#777')+C(18,15,1,'#777'),
star1:R(0,1,21,19,'#1e95ea')+P('M10 4V16M5 7 16 13M16 7 5 13','none','#fff',2.5)+C(18,18,6,'#f09a5a')+P('M15 16H21M15 19H21','none','#fff',1.3),
star2:P('M2 1H22V19H14L17 24 7 19H2Z','#1e95ea')+P('M12 4V16M7 7 17 13M17 7 7 13','none','#fff',2.5),
usb:R(8,1,9,6,'none','#ddd',1.3)+R(5,7,14,16,'none','#ddd',1.3)+P('M14 19 17 22 23 15','none','#ddd',1.3),
shield:P('M12 1 23 4C23 14 19 20 12 23C5 20 1 14 1 4Z','#fff')+P('M12 1V23M1 11H22','none','#222',1.5)+P('M17 12 24 24H11Z','#f8c51c')+P('M17 16V20','none','#222'),
wps:R(0,0,24,24,'#2479ee')+P('M4 8 7 16 10 9 12 13 14 9 17 16 20 8','none','#fff',2),
prt:R(2,8,20,12,'#aab','#778')+R(5,2,14,8,'#dde')+P('M9 15 14 21 23 10','none','#3cb648',3.5),
mon:P('M10 4H23V18H3V11M12 18V22M8 22H18','none','#eee',1.3)+R(1,3,7,7,'none','#eee',1.2),
spk:P('M2 9H6L12 4V20L6 15H2Z','none','#eee',1.3)+P('M15 9C17 11 17 13 15 15M18 6C22 10 22 14 18 18','none','#ccc',1.2),
sogou:P('M4 1 21 3 22 21 5 23 1 18Z','#e8562a')+P('M17 7C12 5 7 7 8 10C9 13 16 11 16 15C16 18 9 19 6 16','none','#fff',2.8),
aX:R(1,1,22,22,'#3f9a3c')+P('M1 1H17L1 17Z','#6cbc4c')+P('M4 4 19 18M20 3 5 18','none','#fff',3)+P('M3 8 4 3 9 4M15 3H21V8M3 14V20H9M20 14 19 19','none','#fff',2)+T(18,23,'5',6,'#fff'),
aCalc:R(3,1,18,22,'#6c7f93')+R(5,3,14,4,'#46cdf2')+['5','10','15'].map(x=>R(x,9,3.5,3.5,'#dfe6ee')+R(x,14,3.5,3.5,'#dfe6ee')+R(x,19,3.5,3,'#dfe6ee')).join('')+R(15,14,4,8,'#1d4f91'),
aWheel:[['#e64cc8',0],['#f24b4b',60],['#fbc21f',120],['#7ad638',180],['#23b4f0',240],['#8a62f0',300]].map(([c,a])=>`<path transform="rotate(${a} 12 12)" d="M12 12C7 9 6 3 11 1C17 0 21 3 22 7C18 6 14 7 12 12Z" fill="${c}"/>`).join('')+C(12,12,2,'#fff'),
aFold:P('M2 4H10L12 7H22V20H2Z','#fbd35e')+P('M2 4H10L11 6H2Z','#e09a1c')+P('M5 20V13H19V20H15V16H9V20Z','#3f93d6'),
aPlay:P('M1 5C1 0 6 1 9 3L20 9V15L9 21C3 24 1 22 1 18Z','#f7a11b')+P('M5 3C5 0 8 0 11 2L22 9C24 11 24 13 22 15L11 22C7 24 5 23 5 20Z','#2e9bea')+P('M4 5 18 12 4 21Z','#59c536')+P('M8 8 15 12 8 16Z','#fff'),
aCad:R(2,6,20,17,'#ececef')+T(14,13,'20',6,'#c22')+T(14,19,'10',6,'#c22')+P('M3 17 6 1 9 0 15 15 11 17 10 14 8 14 7 18Z','#b5202c')+P('M8 10 8 6 10 10Z','#fff'),
aGts:R(1,1,22,22,'#f8f8f8')+P('M2 12 10 3 13 6 7 12 13 18 10 21Z','#c43a25')+P('M11 4 15 2 21 8 17 10Z','#1f5f88')+P('M9 12 14 8H21L14 14Z','#22a0b4')+P('M7 14 13 20 17 15 12 12Z','#f2a52a')+T(12,22,'NX',8,'#d33a20',400),
aWps:P('M1 4H9L11 14 14 4H23L22 8 16 22H11L9 15 8 20H6Z','#e5331f')+P('M4 7H7L10 17M17 7 13 18','none','#ff8a6a',1.3)+R(15,14,8,9,'#5d8ff0')+P('M17 17 18 20 19 18 20 20 21 17','none','#fff',1),
aRed:R(0,0,24,24,'#fff')+P('M12 1 14 3.500 12 6 10 3.500ZM12 7V13M8 6 3 12 5 15 8 13M16 6 21 12 19 15 16 13M8 6V13L12 17 16 13V6M8 14 10 16 8 18 6 16ZM16 14 18 16 16 18 14 16ZM12 18 14 20 12 22 10 20Z','none','#c9202c',1.6),
aEdge:C(12,12,11,'#1373c9')+P('M1 11C2 3 9 0 14 1C21 2 24 8 23 12C22 16 17 16 15 15C17 11 14 8 11 8C7 7 3 8 1 11Z','#2fc5a0')+P('M11 9C7 12 9 19 15 20C18 21 20 20 21 18C15 20 11 15 13 11Z','#0b4a94')+P('M14 1C21 2 24 8 23 12C22 16 17 16 15 15C16 11 16 8 12 6Z','#4fd37a')+P('M12 10C9 14 13 18 17 17L14 14Z','#1b1d26'),
aMus:`<rect width="24" height="24" rx="4" fill="#dd1226"/>`+P('M16 5C13 4 12 6 13 9L14 13C14 17 9 17 9 13C9 9 18 7 19 14C19 21 6 22 5 14C5 10 8 8 10 7','none','#fff',1.8)
};
const svg=(n,c='ic')=>`<svg class="${c}" data-i="${n}"></svg>`;
const btn=(n,on)=>`<button class="tb${on?' on':''}" aria-label="${n}">${svg(n)}</button>`;
const bars=['','clip1 mirror grad','grid plane wcs *gcs | meshmv meshed | nodes','surf | noder noder2 | onn boxn | ask | tri trib | meas','za zag | zw zpm rot rotc pan4 | win4 axz axy | cf cb ct cbo cl cr | iso v isog v isoo isos isop'];
const items=s=>s.split(' ').map(t=>t==='|'?'<span class="vr2"></span>':t==='v'?'<span class="drop"><span class="caret"></span></span>':btn(t.replace('*',''),t[0]==='*')).join('');
document.getElementById('tools').innerHTML=bars.map(b=>(b?`<div class="tbar d-flex align-items-center"><span class="dots"></span>${items(b)}</div>`:'')+'<span class="cap"></span>').join('');
document.getElementById('vtools').innerHTML=items('*v1 v2 | v3 v |')+'<span class="ps-2 pe-3">无操作 (O)</span><button class="ddbtn" aria-label="操作"><span class="caret"></span></button><div class="combo-box ms-1 me-1"><select class="combo" aria-label="过滤"></select><span class="caret"></span></div>'+items('| v4 v4 v6 | v7 v8 | v9 v10 | v11');
const rows=[[171,'a29efb','挖-031'],[172,'ffbf9e','挖-030'],[173,'84c000','挖-033'],[174,'ff5a5a','挖-032'],[175,'007f3a','挖-035'],[176,'0080bf','挖-034'],[177,'c24700','挖-037'],[178,'d2d2d4','挖-036'],[179,'c400c4','挖-039'],[180,'5800be','挖-038'],[181,'d4a0ff'],[182,'caa3f3'],[183,'00a0ea'],[184,'e2ffae'],[197,'c1c100'],[198,'ffadd8'],[199,'7f58d0'],[200,'ff00bf'],[201,'56c000'],[202,'1b4677'],[203,'ff8000'],[204,'009cc4'],[1171,'7f58d0','0'],[1172,'ff00bf','1'],[1173,'56c000','2'],[1174,'1b4677','3']];
document.getElementById('rows').innerHTML=rows.map(([n,c,t=''])=>`<tr${n===181?' class="sel"':''}><td><div class="nm${n>1000?' far':''}">${t}</div></td><td>${n}</td><td><div class="sw" style="background:#${c}"></div></td></tr>`).join('');
const lg=[['f00','0.0%','+3'],['ff4800','0.0%','+2'],['ffcc00','0.0%','+2'],['ffff00','0.0%','+2'],['96ff00','0.0%','+1'],['1eff00','0.0%','+1'],['00ff1e','0.2%','+1'],['00ff96','0.4%','+1'],['00ffff','0.5%','+7'],['00c8ff','1.5%','+3'],['0050ff','96.1%','+6'],['0000ff','1.2%','-2']];
document.getElementById('legend').innerHTML=lg.map(([c,p,v],i)=>`<div class="lg-item"><b style="background:#${c}"></b>${p}<em>${v}</em>${i===11?'<em class="end">-5</em>':''}</div>`).join('');
document.getElementById('log').innerHTML=['许可证获得许可.',...Array(5).fill('未选择导向曲线.'),'当前项目因自动保存功能被保存.'].map(t=>`<div>${t}</div>`).join('');
document.getElementById('apps').innerHTML=[['aX',''],['aCalc',''],['aWheel','run'],['aFold','more'],['aPlay','more'],['aCad','run'],['aGts','run on'],['aWps','more'],['aRed','more'],['aEdge','run'],['aMus','run']].map(([n,c])=>`<button class="app ${c}" aria-label="${n.slice(1)}">${svg(n)}<i></i></button>`).join('');
document.getElementById('tray').innerHTML=['tChev','wechat','star1','star2','usb','shield','wps','prt','mon','spk'].map(n=>svg(n)).join('');
document.getElementById('piles').innerHTML=[772,855,938,1020,1103,1185,1267,1349].map((x,i)=>`<path d="M${x} ${840+i}V${i?882:868}" stroke="#5b4a94" stroke-width="9"/><path d="M${x} ${840+i}V${i?880:866}" stroke="#a98fe0" stroke-width="4"/>${i?`<path d="M${x+8} ${843+i}V${852+i}" stroke="#7b66b4" stroke-width="6"/>`:''}`).join('');
document.querySelectorAll('svg[data-i]').forEach(s=>{s.setAttribute('viewBox',s.dataset.i==='brand'?'0 0 60 24':'0 0 24 24');s.innerHTML=I[s.dataset.i]});
</script>
<script src="https://cdn.jsdelivr.net/npm/bootstrap@5.3.0/dist/js/bootstrap.bundle.min.js"></script>
</body>
</html>
